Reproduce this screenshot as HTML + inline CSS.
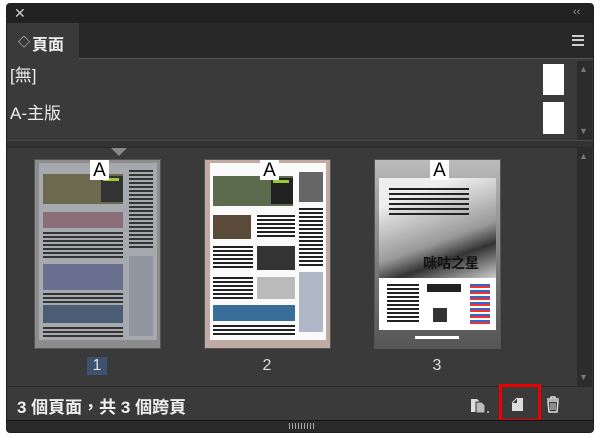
<!DOCTYPE html>
<html><head><meta charset="utf-8"><style>
*{margin:0;padding:0;box-sizing:border-box}
body{width:600px;height:440px;background:#fff;position:relative;overflow:hidden;font-family:"Liberation Sans","Noto Sans CJK TC",sans-serif}
.panel{position:absolute;left:6px;top:3px;width:588px;height:430px;background:#3a3a3a;border-radius:4px;overflow:hidden;border:1px solid #1e1e1e}
.abs{position:absolute}
.pg{position:absolute;top:155px;width:127px;height:190px;border:1px solid #555}
.A{position:absolute;left:55px;top:0;width:19px;height:20px;background:#fff;color:#000;font-size:19px;line-height:21px;text-align:center}
.lbl{position:absolute;top:353px;font-size:16px;color:#ddd;width:20px;text-align:center}
</style></head><body>
<div class="panel">
 <div class="abs" style="left:0;top:0;width:588px;height:19px;background:#222"></div>
 <div class="abs" style="left:7px;top:1px;color:#ccc;font-size:14px">✕</div>
 <div class="abs" style="left:566px;top:2px;color:#999;font-size:11px">‹‹</div>
 <div class="abs" style="left:0;top:19px;width:588px;height:35px;background:#282828"></div>
 <div class="abs" style="left:0;top:19px;width:72px;height:37px;background:#3a3a3a"></div>
 <div class="abs" style="left:11px;top:29px;color:#ddd;font-size:12px">◇</div>
 <div class="abs" style="left:25px;top:27px;color:#eee;font-size:16px;font-weight:bold">頁面</div>
 <div class="abs" style="left:565px;top:31px;width:12px;height:11px;border-top:2px solid #ccc;border-bottom:2px solid #ccc"><div style="margin-top:2px;height:2px;background:#ccc"></div></div>
 <div class="abs" style="left:72px;top:54px;width:516px;height:1px;background:#555"></div>
 <div class="abs" style="left:3px;top:57px;color:#eee;font-size:17px">[無]</div>
 <div class="abs" style="left:3px;top:95px;color:#eee;font-size:17px">A-主版</div>
 <div class="abs" style="left:536px;top:60px;width:21px;height:31px;background:#fff"></div>
 <div class="abs" style="left:536px;top:98px;width:21px;height:32px;background:#fff"></div>
 <div class="abs" style="left:570px;top:57px;width:15px;height:79px;background:#2c2c2c"></div>
 <div class="abs" style="left:572px;top:60px;color:#777;font-size:9px">▲</div>
 <div class="abs" style="left:572px;top:122px;color:#777;font-size:9px">▼</div>
 <div class="abs" style="left:0;top:136px;width:588px;height:8px;background:#333;border-top:1px solid #4a4a4a;border-bottom:1px solid #2a2a2a"></div>
 <div class="abs" style="left:570px;top:144px;width:15px;height:238px;background:#2c2c2c"></div>
 <div class="abs" style="left:572px;top:147px;color:#777;font-size:9px">▲</div>
 <div class="abs" style="left:572px;top:368px;color:#777;font-size:9px">▼</div>
 <div class="abs" style="left:104px;top:144px;width:0;height:0;border-left:8px solid transparent;border-right:8px solid transparent;border-top:8px solid #888"></div>
 <div class="pg" style="left:27px;background:#8c8c8c">
  <div class="abs" style="left:4px;top:3px;width:118px;height:177px;background:#a6a9ad"></div>
  <div class="abs" style="left:8px;top:14px;width:80px;height:30px;background:#6b6a4e"></div>
  <div class="abs" style="left:66px;top:16px;width:22px;height:26px;background:#333"></div>
  <div class="abs" style="left:68px;top:18px;width:16px;height:3px;background:#9c3"></div>
  <div class="abs" style="left:8px;top:52px;width:80px;height:16px;background:#8a6e78"></div>
  <div class="abs" style="left:8px;top:104px;width:80px;height:26px;background:#6c7090"></div>
  <div class="abs" style="left:8px;top:145px;width:80px;height:18px;background:#4a5d74"></div>
  <div class="abs" style="left:8px;top:72px;width:80px;height:28px;background:repeating-linear-gradient(#333 0 2px,transparent 2px 4px)"></div>
  <div class="abs" style="left:8px;top:133px;width:80px;height:10px;background:repeating-linear-gradient(#333 0 2px,transparent 2px 4px)"></div>
  <div class="abs" style="left:8px;top:167px;width:80px;height:10px;background:repeating-linear-gradient(#333 0 2px,transparent 2px 4px)"></div>
  <div class="abs" style="left:94px;top:10px;width:24px;height:80px;background:repeating-linear-gradient(#333 0 2px,transparent 2px 4px)"></div>
  <div class="abs" style="left:94px;top:96px;width:24px;height:80px;background:#8f96a0"></div>
  <div class="A">A</div>
 </div>
 <div class="pg" style="left:197px;background:#c0aaa4">
  <div class="abs" style="left:5px;top:3px;width:116px;height:177px;background:#fafafa"></div>
  <div class="abs" style="left:8px;top:16px;width:80px;height:30px;background:#5c6a4e"></div>
  <div class="abs" style="left:66px;top:18px;width:22px;height:26px;background:#222"></div>
  <div class="abs" style="left:68px;top:20px;width:16px;height:3px;background:#9c3"></div>
  <div class="abs" style="left:8px;top:55px;width:38px;height:24px;background:#5a4a3a"></div>
  <div class="abs" style="left:52px;top:55px;width:38px;height:24px;background:repeating-linear-gradient(#222 0 2px,transparent 2px 4px)"></div>
  <div class="abs" style="left:8px;top:86px;width:40px;height:24px;background:repeating-linear-gradient(#222 0 2px,transparent 2px 4px)"></div>
  <div class="abs" style="left:52px;top:86px;width:38px;height:24px;background:#333"></div>
  <div class="abs" style="left:8px;top:117px;width:40px;height:22px;background:repeating-linear-gradient(#222 0 2px,transparent 2px 4px)"></div>
  <div class="abs" style="left:52px;top:117px;width:38px;height:22px;background:#bbb"></div>
  <div class="abs" style="left:8px;top:145px;width:82px;height:16px;background:#3a6e9a"></div>
  <div class="abs" style="left:8px;top:165px;width:82px;height:12px;background:repeating-linear-gradient(#222 0 2px,transparent 2px 4px)"></div>
  <div class="abs" style="left:94px;top:12px;width:24px;height:30px;background:#666"></div>
  <div class="abs" style="left:94px;top:48px;width:24px;height:60px;background:repeating-linear-gradient(#222 0 2px,transparent 2px 4px)"></div>
  <div class="abs" style="left:94px;top:112px;width:24px;height:60px;background:#b0b8c8"></div>
  <div class="A">A</div>
 </div>
 <div class="pg" style="left:367px;background:#8c8c8c">
  <div class="abs" style="left:0;top:0;width:125px;height:188px;background:linear-gradient(#bbb,#777 60%,#555)"></div>
  <div class="abs" style="left:4px;top:18px;width:117px;height:100px;background:linear-gradient(160deg,#eee 20%,#999 60%,#333 75%,#ccc)"></div>
  <div class="abs" style="left:14px;top:28px;width:80px;height:30px;background:repeating-linear-gradient(#222 0 2px,transparent 2px 5px)"></div>
  <div class="abs" style="left:48px;top:93px;font-size:14px;font-weight:bold;color:#111">咪咕之星</div>
  <div class="abs" style="left:4px;top:118px;width:117px;height:52px;background:#fff"></div>
  <div class="abs" style="left:12px;top:124px;width:32px;height:40px;background:repeating-linear-gradient(#222 0 2px,transparent 2px 4px)"></div>
  <div class="abs" style="left:52px;top:124px;width:34px;height:8px;background:#222"></div>
  <div class="abs" style="left:58px;top:148px;width:14px;height:14px;background:#333"></div>
  <div class="abs" style="left:95px;top:124px;width:20px;height:40px;background:repeating-linear-gradient(#36c 0 2px,#e33 2px 4px,transparent 4px 6px)"></div>
  <div class="abs" style="left:40px;top:176px;width:44px;height:3px;background:#fff"></div>
  <div class="A">A</div>
 </div>
 <div class="lbl" style="left:80px;background:#3c5270">1</div>
 <div class="lbl" style="left:250px">2</div>
 <div class="lbl" style="left:420px">3</div>
 <div class="abs" style="left:0;top:382px;width:588px;height:1px;background:#2a2a2a"></div>
 <div class="abs" style="left:10px;top:389px;color:#eee;font-size:17px;font-weight:bold">3 個頁面，共 3 個跨頁</div>
 <svg class="abs" style="left:462px;top:391px" width="22" height="20"><path d="M2 4h6l3 3v10H2z" fill="#ddd"/><path d="M7 7h6l3 3v8H7z" fill="#bbb" stroke="#333"/><circle cx="19" cy="17" r="1" fill="#ccc"/></svg>
 <svg class="abs" style="left:502px;top:391px" width="16" height="18"><path d="M3 3h11v13H3z" fill="#ddd"/><path d="M3 3h5v5H3z" fill="#3a3a3a"/><path d="M3 8l5-5" stroke="#ddd"/></svg>
 <div class="abs" style="left:492px;top:380px;width:42px;height:38px;border:3px solid #e00"></div>
 <svg class="abs" style="left:538px;top:391px" width="16" height="18"><path d="M2 4h12M6 4V2h4v2M3 6h10l-1 11H4z" fill="none" stroke="#ddd" stroke-width="1.5"/><path d="M6 8v7M8 8v7M10 8v7" stroke="#ddd"/></svg>
 <div class="abs" style="left:0;top:416px;width:588px;height:14px;background:#2a2a2a;border-top:1px solid #111"></div>
 <div class="abs" style="left:282px;top:419px;width:26px;height:6px;background:repeating-linear-gradient(90deg,#aaa 0 1px,transparent 1px 3px)"></div>
</div>
</body></html>
